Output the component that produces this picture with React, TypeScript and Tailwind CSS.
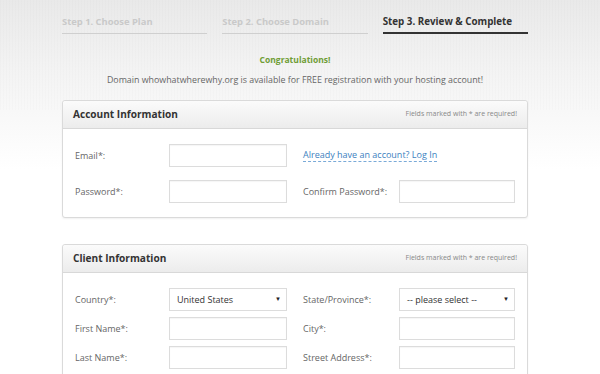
import React from "react";

const Input = ({ w = "w-[118px]" }: { w?: string }) => (
  <div className={`${w} h-[23px] border border-[#dcdcdc] bg-white shadow-[inset_0_1px_1px_rgba(0,0,0,0.04)]`} />
);

const Select = ({ text, w = "w-[118px]" }: { text: string; w?: string }) => (
  <div className={`${w} h-[23px] border border-[#dcdcdc] bg-white flex items-center justify-between pl-[7px] pr-[5px]`}>
    <span className="text-[9px] text-[#333]">{text}</span>
    <span className="text-[6px] text-[#222]">▼</span>
  </div>
);

const Label = ({ children }: { children: React.ReactNode }) => (
  <div className="w-[106px] shrink-0 text-[9px] text-[#666] pl-[12px]">{children}</div>
);

const RLabel = ({ children }: { children: React.ReactNode }) => (
  <div className="ml-[16px] w-[96px] shrink-0 text-[9px] text-[#666]">{children}</div>
);

const Panel = ({ title, children }: { title: string; children: React.ReactNode }) => (
  <div className="w-[466px] border border-[#dadada] rounded-[3px] bg-white shadow-[0_1px_2px_rgba(0,0,0,0.06)]">
    <div className="h-[28px] flex items-center justify-between px-[10px] border-b border-[#d8d8d8] bg-gradient-to-b from-[#fbfbfb] to-[#ececec] rounded-t-[3px]">
      <span className="text-[10.1px] font-bold text-[#333]">{title}</span>
      <span className="text-[7px] text-[#888]">Fields marked with * are required!</span>
    </div>
    {children}
  </div>
);

export default function App() {
  return (
    <div
      className="relative w-[600px] h-[374px] overflow-hidden bg-white"
      style={{ fontFamily: '"Open Sans", "Liberation Sans", sans-serif' }}
    >
      <div className="absolute top-0 left-0 w-[600px] h-[170px] bg-[linear-gradient(to_bottom,#e9e9e9_0%,#f3f3f3_40%,#ffffff_100%)]" />
      <div className="absolute top-0 left-0 w-[600px] h-[110px] bg-[repeating-linear-gradient(90deg,rgba(0,0,0,0.012)_0px,rgba(0,0,0,0.012)_1px,transparent_1px,transparent_3px)]" />
      <div className="relative pl-[62px] pt-[15px]">
        <div className="grid grid-cols-3 gap-[15px] w-[466px]">
          <div className="border-b border-[#cfcfcf] pb-[4px] text-[9.4px] leading-[14px] font-bold text-[#c9c9c9] whitespace-nowrap">Step 1. Choose Plan</div>
          <div className="border-b border-[#cfcfcf] pb-[4px] text-[9.4px] leading-[14px] font-bold text-[#c9c9c9] whitespace-nowrap">Step 2. Choose Domain</div>
          <div className="border-b-2 border-[#333] pb-[3px] text-[9.8px] leading-[14px] font-bold text-[#333] whitespace-nowrap">Step 3. Review &amp; Complete</div>
        </div>
        <div className="w-[466px] text-center mt-[20px] text-[8.5px] leading-[12px] font-bold text-[#6f9d35]">Congratulations!</div>
        <div className="w-[466px] text-center mt-[8px] text-[8.85px] leading-[13px] text-[#666]">
          Domain whowhatwherewhy.org is available for FREE registration with your hosting account!
        </div>
        <div className="mt-[13px]">
          <Panel title="Account Information">
            <div className="pt-[15px] pb-[14px] flex flex-col gap-[13px]">
              <div className="flex items-center">
                <Label>Email*:</Label>
                <Input />
                <div className="ml-[16px] text-[9px] text-[#3c7fc0] border-b border-dashed border-[#7aaad8] leading-[12px]">
                  Already have an account? Log In
                </div>
              </div>
              <div className="flex items-center">
                <Label>Password*:</Label>
                <Input />
                <RLabel>Confirm Password*:</RLabel>
                <Input w="w-[116px]" />
              </div>
            </div>
          </Panel>
        </div>
        <div className="mt-[26px]">
          <Panel title="Client Information">
            <div className="pt-[15px] pb-[14px] flex flex-col gap-[6px]">
              <div className="flex items-center">
                <Label>Country*:</Label>
                <Select text="United States" />
                <RLabel>State/Province*:</RLabel>
                <Select text="-- please select --" w="w-[116px]" />
              </div>
              <div className="flex items-center">
                <Label>First Name*:</Label>
                <Input />
                <RLabel>City*:</RLabel>
                <Input w="w-[116px]" />
              </div>
              <div className="flex items-center">
                <Label>Last Name*:</Label>
                <Input />
                <RLabel>Street Address*:</RLabel>
                <Input w="w-[116px]" />
              </div>
            </div>
          </Panel>
        </div>
      </div>
    </div>
  );
}
